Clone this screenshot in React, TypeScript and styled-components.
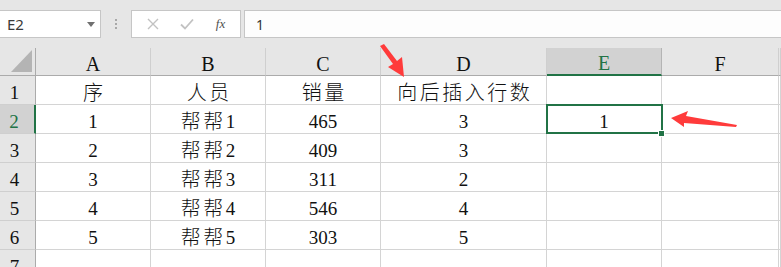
import React from "react";
import styled, { createGlobalStyle, css } from "styled-components";

const GREEN = "#217346";

const GlobalStyle = createGlobalStyle`
  html, body {
    margin: 0;
    padding: 0;
    background: #ffffff;
  }
`;

const Page = styled.div`
  position: relative;
  width: 781px;
  height: 267px;
  overflow: hidden;
  background: #ffffff;
`;

const FormulaBar = styled.div`
  height: 48px;
  box-sizing: border-box;
  padding-top: 10px;
  display: flex;
  align-items: flex-start;
  background: #e6e6e6;
`;

const NameBox = styled.div`
  width: 101px;
  height: 28px;
  box-sizing: border-box;
  border: 1px solid #c6c6c6;
  border-left: none;
  background: #ffffff;
  display: flex;
  align-items: center;
  justify-content: space-between;
  padding: 0 5px 0 7px;
  font-family: "Noto Sans", "Liberation Sans", sans-serif;
  font-size: 15px;
  color: #3a3a3a;
`;

const DropArrow = styled.span`
  width: 0;
  height: 0;
  border-left: 4px solid transparent;
  border-right: 4px solid transparent;
  border-top: 5px solid #707070;
`;

const Dots = styled.div`
  width: 30px;
  height: 28px;
  display: flex;
  flex-direction: column;
  align-items: center;
  justify-content: center;
  gap: 2px;

  span {
    width: 2px;
    height: 2px;
    background: #a8a8a8;
  }
`;

const ButtonBox = styled.div`
  width: 110px;
  height: 28px;
  box-sizing: border-box;
  border: 1px solid #c6c6c6;
  background: #ffffff;
  display: flex;
  align-items: center;
  justify-content: space-around;
  padding: 0 4px;
`;

const Fx = styled.span`
  font-family: "Liberation Serif", serif;
  font-style: italic;
  font-size: 13px;
  color: #505050;
`;

const FormulaInput = styled.div`
  flex: 1;
  margin-left: 3px;
  height: 28px;
  box-sizing: border-box;
  border: 1px solid #c6c6c6;
  border-right: none;
  background: #fdfdfd;
  display: flex;
  align-items: center;
  padding-left: 11px;
  font-family: "Noto Sans", "Liberation Sans", sans-serif;
  font-size: 14px;
  color: #333;
`;

const Grid = styled.div`
  display: grid;
  grid-template-columns: 36px 115px 115px 115px 166px 115px 117px 1fr;
  grid-auto-rows: 29px;
  grid-template-rows: 28px;
  font-family: "Liberation Serif", "Noto Sans CJK SC", serif;
  font-size: 19px;
  color: #111;
`;

const Cell = styled.div<{ $selected?: boolean }>`
  position: relative;
  box-sizing: border-box;
  border-right: 1px solid #d4d4d4;
  border-bottom: 1px solid #d4d4d4;
  display: flex;
  align-items: center;
  justify-content: center;
  padding-top: 5px;
  white-space: nowrap;

  ${(p) =>
    p.$selected &&
    css`
      &::after {
        content: "";
        position: absolute;
        left: -1px;
        top: -1px;
        right: -2px;
        bottom: -1px;
        border: 2px solid ${GREEN};
      }
      &::before {
        content: "";
        position: absolute;
        right: -4px;
        bottom: -4px;
        width: 5px;
        height: 5px;
        background: ${GREEN};
        border: 1px solid #fff;
        z-index: 1;
      }
    `}
`;

const Han = styled.span`
  font-family: "Noto Sans CJK SC", sans-serif;
  font-size: 20px;
  font-weight: 300;
  letter-spacing: 2.5px;
  margin-top: -2px;

  &:last-child {
    margin-right: -2.5px;
  }
`;

const ColHead = styled(Cell)<{ $active?: boolean }>`
  background: ${(p) => (p.$active ? "#d2d2d2" : "#e6e6e6")};
  border-right: 1px solid ${(p) => (p.$active ? "#b4b4b4" : "#cfcfcf")};
  border-bottom: ${(p) => (p.$active ? `2px solid ${GREEN}` : "1px solid #ababab")};
  color: ${(p) => (p.$active ? GREEN : "#111")};
  font-size: 20px;
`;

const RowHead = styled(Cell)<{ $active?: boolean }>`
  background: ${(p) => (p.$active ? "#d2d2d2" : "#e6e6e6")};
  border-right: ${(p) => (p.$active ? `2px solid ${GREEN}` : "1px solid #ababab")};
  border-bottom: 1px solid #cfcfcf;
  color: ${(p) => (p.$active ? GREEN : "#111")};
  padding-right: 6px;
`;

const Corner = styled(ColHead)`
  border-right: 1px solid #ababab;
  align-items: flex-end;
  justify-content: flex-end;
  padding: 0 3px 3px 0;
`;

const Arrow = styled.svg`
  position: absolute;
  left: 0;
  top: 0;
  pointer-events: none;
`;

const columns = ["A", "B", "C", "D", "E", "F"];

const rows: string[][] = [
  ["序", "人员", "销量", "向后插入行数", "", ""],
  ["1", "帮帮1", "465", "3", "1", ""],
  ["2", "帮帮2", "409", "3", "", ""],
  ["3", "帮帮3", "311", "2", "", ""],
  ["4", "帮帮4", "546", "4", "", ""],
  ["5", "帮帮5", "303", "5", "", ""],
  ["", "", "", "", "", ""],
];

// split into runs so Chinese gets its own, wider face
function renderText(text: string) {
  const parts = text.match(/[\u4e00-\u9fff]+|[^\u4e00-\u9fff]+/g) || [];
  return parts.map((p, i) =>
    /[\u4e00-\u9fff]/.test(p) ? <Han key={i}>{p}</Han> : <span key={i}>{p}</span>
  );
}

export default function App() {
  return (
    <Page>
      <GlobalStyle />
      <FormulaBar>
        <NameBox>
          E2
          <DropArrow />
        </NameBox>
        <Dots>
          <span />
          <span />
          <span />
        </Dots>
        <ButtonBox>
          <svg width="12" height="12" viewBox="0 0 12 12">
            <path d="M1 1L11 11M11 1L1 11" stroke="#c2c2c2" strokeWidth="1.4" />
          </svg>
          <svg width="14" height="12" viewBox="0 0 14 12">
            <path d="M1 6.5L5 10.5L13 1.5" stroke="#c2c2c2" strokeWidth="1.8" fill="none" />
          </svg>
          <Fx>fx</Fx>
        </ButtonBox>
        <FormulaInput>1</FormulaInput>
      </FormulaBar>

      <Grid>
        <Corner>
          <svg width="21" height="22" viewBox="0 0 21 22">
            <polygon points="21,0 21,22 0,22" fill="#b4b4b4" />
          </svg>
        </Corner>
        {columns.map((c) => (
          <ColHead key={c} $active={c === "E"}>
            {c}
          </ColHead>
        ))}
        <ColHead />
        {rows.map((row, r) => (
          <React.Fragment key={r}>
            <RowHead $active={r === 1}>{r + 1}</RowHead>
            {row.map((v, c) => (
              <Cell key={c} $selected={r === 1 && c === 4}>
                {renderText(v)}
              </Cell>
            ))}
            <Cell />
          </React.Fragment>
        ))}
      </Grid>

      <Arrow width="781" height="267">
        <polygon points="380,46 384,44 397,61 402,57 404,77 388,67 393,64" fill="#ff3b3b" />
        <polygon points="671,118 688,111 686,116 737,125 736,127 684,123 684,127" fill="#ff3b3b" />
      </Arrow>
    </Page>
  );
}
